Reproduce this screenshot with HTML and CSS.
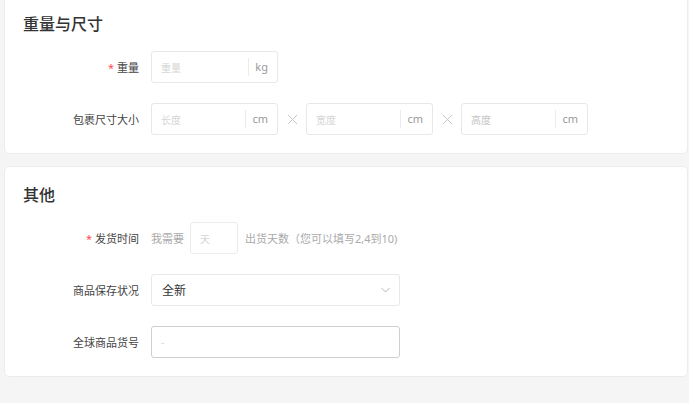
FILE: index.html
```html
<!DOCTYPE html>
<html lang="zh-CN">
<head>
<meta charset="utf-8">
<title>重量与尺寸</title>
<link rel="stylesheet" href="styles.css">
</head>
<body>
<div class="page">
  <section class="card card-first">
    <h2 class="card-title">重量与尺寸</h2>
    <div class="form-row">
      <label class="label required">重量</label>
      <div class="control">
        <div class="affix-input">
          <span class="ph">重量</span>
          <span class="suffix">kg</span>
        </div>
      </div>
    </div>
    <div class="form-row">
      <label class="label">包裹尺寸大小</label>
      <div class="control">
        <div class="affix-input">
          <span class="ph">长度</span>
          <span class="suffix">cm</span>
        </div>
        <span class="times"><svg width="11" height="11" viewBox="0 0 11 11"><path d="M1 1L10 10M10 1L1 10" stroke="#c8c8c8" stroke-width="1" fill="none"/></svg></span>
        <div class="affix-input">
          <span class="ph">宽度</span>
          <span class="suffix">cm</span>
        </div>
        <span class="times"><svg width="11" height="11" viewBox="0 0 11 11"><path d="M1 1L10 10M10 1L1 10" stroke="#c8c8c8" stroke-width="1" fill="none"/></svg></span>
        <div class="affix-input">
          <span class="ph ph-dark">高度</span>
          <span class="suffix">cm</span>
        </div>
      </div>
    </div>
  </section>

  <section class="card">
    <h2 class="card-title">其他</h2>
    <div class="form-row">
      <label class="label required">发货时间</label>
      <div class="control">
        <span class="hint">我需要</span>
        <div class="small-input"><span class="ph">天</span></div>
        <span class="hint">出货天数（您可以填写2,4到10)</span>
      </div>
    </div>
    <div class="form-row">
      <label class="label">商品保存状况</label>
      <div class="control">
        <div class="select">
          <span class="select-value">全新</span>
          <svg class="chevron" width="9" height="6" viewBox="0 0 9 6"><path d="M0.5 1L4.5 5L8.5 1" stroke="#b8b8b8" stroke-width="1" fill="none"/></svg>
        </div>
      </div>
    </div>
    <div class="form-row">
      <label class="label">全球商品货号</label>
      <div class="control">
        <div class="text-input"><span class="ph">-</span></div>
      </div>
    </div>
  </section>
</div>
</body>
</html>
```

FILE: styles.css
```css
html, body {
  margin: 0;
  padding: 0;
  background: #f5f5f5;
  height: 100%;
  overflow: hidden;
}
body {
  font-family: "Noto Sans", "Noto Sans CJK SC", sans-serif;
  color: #333;
}
.page {
  padding: 0 1px 0 4px;
  display: flex;
  flex-direction: column;
  gap: 12px;
}
.card {
  background: #fff;
  border: 1px solid #ececec;
  border-radius: 5px;
  padding: 17px 0 18px 18px;
}
.card-first {
  margin-top: -5px;
}
.card-title {
  margin: 0 0 16px;
  font-size: 16px;
  line-height: 22px;
  font-weight: 500;
  color: #333;
}
.form-row {
  display: flex;
  align-items: center;
  height: 32px;
  margin-bottom: 20px;
}
.form-row:last-child {
  margin-bottom: 0;
}
.label {
  width: 116px;
  flex: none;
  text-align: right;
  font-size: 11px;
  color: #444;
  margin-right: 12px;
  white-space: nowrap;
}
.label.required::before {
  content: "*";
  color: #ff4d4f;
  margin-right: 3px;
  font-size: 11px;
}
.control {
  display: flex;
  align-items: center;
  height: 32px;
}
.affix-input {
  box-sizing: border-box;
  width: 127px;
  height: 32px;
  border: 1px solid #e8e8e8;
  border-radius: 3px;
  display: flex;
  align-items: center;
  background: #fff;
}
.ph {
  flex: 1;
  padding-left: 9px;
  font-size: 10px;
  color: #d6d6d6;
}
.ph-dark {
  color: #c4c4c4;
}
.suffix {
  flex: none;
  border-left: 1px solid #ececec;
  height: 18px;
  line-height: 18px;
  padding: 0 9px 0 6px;
  font-size: 11px;
  color: #999;
}
.times {
  width: 28px;
  display: flex;
  justify-content: center;
  align-items: center;
}
.hint {
  font-size: 11px;
  color: #aaa;
  white-space: nowrap;
}
.small-input {
  box-sizing: border-box;
  width: 48px;
  height: 32px;
  border: 1px solid #ececec;
  border-radius: 3px;
  margin: 0 7px 0 6px;
  display: flex;
  align-items: center;
}
.select {
  box-sizing: border-box;
  width: 249px;
  height: 32px;
  border: 1px solid #e8e8e8;
  border-radius: 3px;
  display: flex;
  align-items: center;
  justify-content: space-between;
  padding: 0 9px 0 10px;
}
.select-value {
  font-size: 12px;
  color: #333;
}
.text-input {
  box-sizing: border-box;
  width: 249px;
  height: 32px;
  border: 1px solid #cfcfcf;
  border-radius: 3px;
  display: flex;
  align-items: center;
}
```
